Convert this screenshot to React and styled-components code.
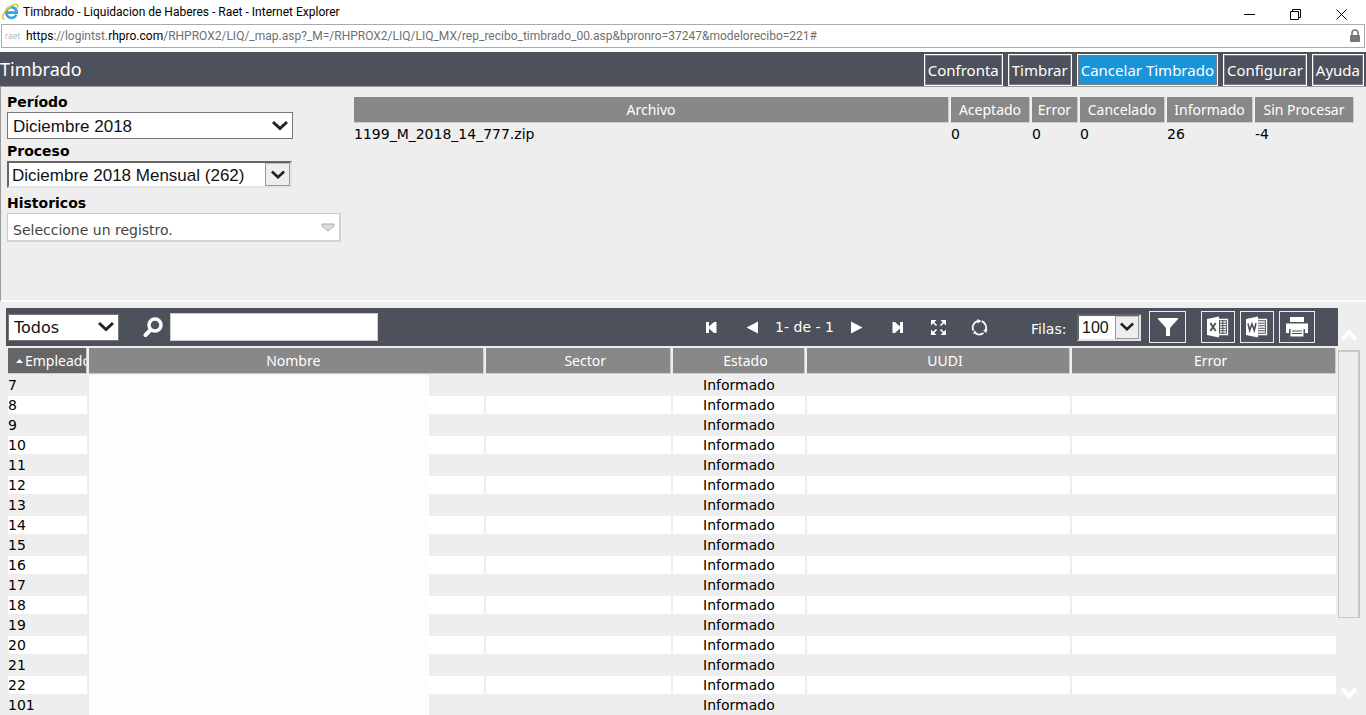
import React from "react";
import styled, { createGlobalStyle, css } from "styled-components";

const segoe = '"Noto Sans", "Open Sans", sans-serif';
const chrome = 'Roboto, "Open Sans", sans-serif';
const verdana = '"DejaVu Sans", sans-serif';
const arial = '"Liberation Sans", Arial, sans-serif';

const Global = createGlobalStyle`
  *, *::before, *::after { box-sizing: border-box; }
  body { margin: 0; background: #eee; font-family: ${verdana}; color: #000; overflow: hidden; }
  button { cursor: pointer; }
`;

const Page = styled.div`
  display: flex;
  flex-direction: column;
  min-height: 100vh;
`;

const TitleBar = styled.header`
  display: flex;
  align-items: center;
  height: 24px;
  padding: 0 2px;
  gap: 4px;
  background: #fff;
  font: 12px/16px ${chrome};
`;

const WindowControls = styled.div`
  display: flex;
  margin-left: auto;
`;

const WindowButton = styled.button`
  display: grid;
  place-items: center;
  width: 46px;
  height: 24px;
  padding: 4px 0 0;
  border: 0;
  background: none;
`;

const AddressArea = styled.div`
  padding: 0 1px 4px;
  background: #fff;
`;

const AddressBar = styled.div`
  display: flex;
  align-items: center;
  height: 24px;
  padding: 0 3px;
  border: 1px solid #aaa;
`;

const SiteMark = styled.span`
  width: 21px;
  color: #d9a3b5;
  font: 8px/12px ${segoe};
  i { font-style: normal; color: #9cc5b5; }
`;

const Url = styled.span`
  flex: 1;
  color: #707070;
  font: 12px/16px ${chrome};
  white-space: nowrap;
  b { font-weight: 400; color: #000; }
`;

const AppHeader = styled.div`
  display: flex;
  align-items: flex-end;
  justify-content: space-between;
  height: 35px;
  padding-right: 2px;
  background: #4d515b;
  border-bottom: 1px solid #999;
`;

const Title = styled.h1`
  margin: 0;
  color: #fff;
  font: 400 18px/34px ${segoe};
`;

const Actions = styled.nav`
  display: flex;
  gap: 5px;
`;

const ActionButton = styled.button`
  height: 32px;
  padding: 0 3px;
  border: 1px solid #fff;
  outline: 1px solid #777b83;
  outline-offset: -2px;
  background: ${(p) => (p.$active ? "#1a94d8" : "#4d515b")};
  color: #fff;
  font: 15px/28px ${segoe};
`;

const TopPanel = styled.section`
  display: flex;
  gap: 11px;
  height: 215px;
  padding: 7px 10px 0 6px;
  border-left: 1px solid #999;
  border-bottom: 2px solid #fafafa;
  background: #eee;
`;

const Filters = styled.div`
  display: flex;
  flex-direction: column;
  width: 334px;
`;

const Label = styled.label`
  height: 18px;
  font: 700 14px/16px ${verdana};
`;

const SelectBox = styled.div`
  display: grid;
  align-items: center;
  width: ${(p) => p.$w}px;
  height: ${(p) => p.$h || 27}px;
  margin-bottom: ${(p) => p.$mb || 0}px;
  background: #fff;
  border: 1px solid #777;
  > * { grid-area: 1 / 1; }
  > svg { justify-self: end; margin-right: 4px; pointer-events: none; }
  ${(p) => p.$inset && css`
    border: 2px solid;
    border-color: #666 #e3e3e3 #e3e3e3 #666;
  `}
  ${(p) => p.$soft && css`
    border: 2px solid;
    border-color: #ccc #d3d3d3 #d3d3d3 #ccc;
    border-top-width: 1px;
    border-left-width: 1px;
  `}
`;

const Select = styled.select`
  appearance: none;
  width: 100%;
  height: 100%;
  padding: ${(p) => p.$top || 0}px 0 0 ${(p) => p.$pad}px;
  border: 0;
  background: transparent;
  color: ${(p) => p.$color || "#111"};
  font: ${(p) => p.$font || `17px/20px ${arial}`};
`;

const ArrowCell = styled.span`
  justify-self: end;
  display: grid;
  place-items: center;
  width: ${(p) => p.$w}px;
  height: 100%;
  border: 1px solid #999;
  border-top-color: #bbb;
  background: #eee;
  pointer-events: none;
`;

const FilesArea = styled.div`
  flex: 1;
  padding-top: 1px;
`;

const Table = styled.table`
  width: 100%;
  table-layout: fixed;
  border-collapse: separate;
  border-spacing: 2px;
  background: #eee;
`;

const Col = styled.col`
  width: ${(p) => p.$w};
`;

const Th = styled.th`
  height: 26px;
  padding: 0 0 0 ${(p) => (p.$sortable ? 14 : 0)}px;
  border-right: 1px solid #ccc;
  border-bottom: 1px solid #ccc;
  background: ${(p) => (p.$sorted ? "#666" : "#888")};
  color: #fff;
  font: 400 14px/24px ${segoe};
  white-space: nowrap;
  overflow: hidden;
`;

const SortHead = styled.span`
  display: flex;
  align-items: center;
  gap: 2px;
  padding-left: 8px;
  svg { flex: none; }
`;

const Td = styled.td`
  height: 18px;
  padding: 0;
  font: 14px/18px ${verdana};
  text-align: ${(p) => p.$align || "left"};
  white-space: nowrap;
`;

const Row = styled.tr`
  &:nth-child(even) td { background: #fff; }
`;

const NameBlank = styled.div`
  width: 86%;
  height: 20px;
  margin: -1px 0;
  background: #fdfdfd;
`;

const Lower = styled.section`
  display: flex;
  flex: 1;
  padding: 6px 6px 0;
`;

const Listing = styled.div`
  flex: 1;
  min-width: 0;
`;

const Toolbar = styled.div`
  display: flex;
  align-items: center;
  height: 38px;
  padding: 0 23px 0 2px;
  background: #4d515b;
  color: #fff;
`;

const SearchButton = styled.button`
  display: grid;
  place-items: center;
  width: 20px;
  height: 24px;
  margin: 0 7px 0 24px;
  padding: 0;
  border: 0;
  background: none;
`;

const SearchInput = styled.input`
  width: 208px;
  height: 28px;
  padding: 0 4px;
  border: 1px solid #ccc;
  background: #fff;
  font: 14px/20px ${verdana};
`;

const Pager = styled.div`
  display: flex;
  align-items: center;
  margin: 0 31px 0 auto;
`;

const PagerButton = styled.button`
  display: grid;
  place-items: center;
  width: 41px;
  height: 28px;
  padding: 0;
  border: 0;
  background: none;
`;

const PageText = styled.span`
  width: 63px;
  font: 14px/18px ${verdana};
  text-align: center;
  white-space: nowrap;
`;

const RowsLabel = styled.label`
  width: 46px;
  padding-top: 4px;
  font: 14px/18px ${verdana};
`;

const ToolGroup = styled.div`
  display: flex;
  gap: 5px;
  margin-left: ${(p) => p.$gap}px;
`;

const ToolButton = styled.button`
  display: grid;
  place-items: center;
  width: ${(p) => p.$w || 34}px;
  height: 32px;
  padding: 0;
  border: 1px solid #eee;
  background: none;
`;

const ScrollTrack = styled.div`
  display: flex;
  flex-direction: column;
  align-items: center;
  width: 22px;
  padding: 21px 0 17px;
`;

const ScrollThumb = styled.div`
  width: 22px;
  height: 268px;
  margin: 9px 0 auto;
  border: 1px solid #c8c8c8;
  border-right-width: 2px;
  border-top-width: 2px;
  background: #eee;
`;

const Chevron = ({ w = 16, color = "#222" }) => (
  <svg width={w} height="12" viewBox="0 0 16 12" aria-hidden="true">
    <path d="M1 2 L8 8.500 L15 2" fill="none" stroke={color} strokeWidth="3" />
  </svg>
);

const ScrollArrow = ({ up }) => (
  <svg width="16" height="12" viewBox="0 0 16 12" aria-hidden="true">
    <path d={up ? "M1 10.5 L8 3 L15 10.5" : "M1 1.5 L8 9 L15 1.5"} fill="none" stroke="#fff" strokeWidth="4" />
  </svg>
);

const BrowserLogo = () => (
  <svg width="17" height="18" viewBox="0 0 17 18" aria-hidden="true">
    <path d="M14.3 11.8A5.3 5.3 0 1 1 14.2 7.2 M4 9.6H14.7C14.8 6 12.3 4 9.2 4" fill="none" stroke="#32a5dc" strokeWidth="2.6" />
    <path d="M2.8 16.2C-1 16 .8 10.5 5 6.2 9.5 1.7 15 0 15.7 2.2c.3 1-.1 2.1-.7 3.1" fill="none" stroke="#f2bd2b" strokeWidth="1.6" />
  </svg>
);

const LockIcon = () => (
  <svg width="12" height="14" viewBox="0 0 12 14" aria-hidden="true">
    <path d="M3 6V4a3 3 0 0 1 6 0v2" fill="none" stroke="#777" strokeWidth="1.6" />
    <rect x="1" y="6" width="10" height="7" rx="1" fill="#777" />
  </svg>
);

const pagerIcons = {
  first: <path d="M3 3h3v4.500L11 3h2.500v11H11L6 9.500V14H3z" />,
  prev: <path d="M14 2.5v12L2.5 8.5z" />,
  next: <path d="M3 2.5v12l11.5-6z" />,
  last: <path d="M14 3h-3v4.500L6 3H3.500v11H6l5-4.500V14h3z" />,
  expand: (
    <g>
      <path d="M1 1h5.500L1 6.500zM16 1v5.500L10.500 1zM1 16v-5.500L6.500 16zM16 16h-5.500l5.500-5.500z" />
      <path d="M2 2l4.500 4.500M15 2l-4.500 4.500M2 15l4.500-4.500M15 15l-4.500-4.500" stroke="#fff" strokeWidth="1.6" />
    </g>
  ),
  refresh: (
    <g>
      <path d="M2.300 11.500A7 7 0 0 1 7 1.800M10.800 2.100A7 7 0 0 1 14.300 11.800M12.500 14A7 7 0 0 1 4 13.800" fill="none" stroke="#fff" strokeWidth="1.7" />
      <path d="M6.500 0l4 2-4 2.500zM16.500 9.800l-1.300 4.400-3-3zM2.200 14.700l1.300-3.500 2.800 3.200z" />
    </g>
  ),
};

const PagerIcon = ({ name, label }) => (
  <PagerButton type="button" aria-label={label}>
    <svg width="17" height="17" viewBox="0 0 17 17" fill="#fff" aria-hidden="true">{pagerIcons[name]}</svg>
  </PagerButton>
);

const FilterIcon = () => (
  <svg width="20" height="20" viewBox="0 0 20 20" fill="#fff" aria-hidden="true">
    <path d="M0 1h20v1l-8 9v8H8v-8L0 2z" />
  </svg>
);

const OfficeIcon = ({ kind }) => (
  <svg width="22" height="22" viewBox="0 0 22 22" aria-hidden="true">
    <path d="M0 3l12-2.500v21L0 19z" fill="#fff" />
    <path d="M12 3.500h8.500v15H12" fill="none" stroke="#fff" strokeWidth="1.3" />
    <path
      d={kind === "excel" ? "M13 6h6M13 8.500h6M13 11h6M13 13.500h6M13 16h6" : "M12 6h7M12 8.500h7M12 11h7M12 13.500h7M12 16h7"}
      stroke="#fff"
      strokeWidth="1.4"
    />
    {kind === "excel" ? (
      <g>
        <path d="M15.800 4v14" stroke="#4d515b" />
        <path d="M3.300 7l5.400 8M8.700 7l-5.400 8" stroke="#4d515b" strokeWidth="1.9" />
      </g>
    ) : (
      <path d="M2 7.500l1.700 7L6 8l2.300 6.500L10 7" fill="none" stroke="#4d515b" strokeWidth="1.6" />
    )}
  </svg>
);

const PrintIcon = () => (
  <svg width="22" height="20" viewBox="0 0 22 20" aria-hidden="true">
    <path d="M4 0h14v5H4zM0 6.500h22V16h-3v-4H3v4H0z" fill="#fff" />
    <path d="M4.500 12h13v7.500h-13z" fill="#fff" />
    <path d="M6 14h10M6 16.500h10" stroke="#4d515b" />
  </svg>
);

const actions = ["Confronta", "Timbrar", "Cancelar Timbrado", "Configurar", "Ayuda"];

const fileColumns = [
  ["Archivo", "auto", "1199_M_2018_14_777.zip"],
  ["Aceptado", "79px", "0"],
  ["Error", "46px", "0"],
  ["Cancelado", "85px", "0"],
  ["Informado", "86px", "26"],
  ["Sin Procesar", "99px", "-4"],
];

const columns = [
  ["Empleado", "6%"],
  ["Nombre", "30%"],
  ["Sector", "14%"],
  ["Estado", "10%"],
  ["UUDI", "20%"],
  ["Error", "20%"],
];

const employees = [7, 8, 9, 10, 11, 12, 13, 14, 15, 16, 17, 18, 19, 20, 21, 22, 101];

export default function App() {
  return (
    <Page>
      <Global />
      <TitleBar>
        <BrowserLogo />
        <span>Timbrado - Liquidacion de Haberes - Raet - Internet Explorer</span>
        <WindowControls>
          <WindowButton type="button" aria-label="Minimizar">
            <svg width="11" height="11"><path d="M0 5.500h11" stroke="#000" /></svg>
          </WindowButton>
          <WindowButton type="button" aria-label="Restaurar">
            <svg width="11" height="11" fill="none" stroke="#000"><path d="M.5 2.500h8v8h-8zM2.500 2.500v-2h8v8h-2" /></svg>
          </WindowButton>
          <WindowButton type="button" aria-label="Cerrar">
            <svg width="11" height="11" stroke="#000"><path d="M.5.5l10 10M10.500.5l-10 10" /></svg>
          </WindowButton>
        </WindowControls>
      </TitleBar>
      <AddressArea>
        <AddressBar>
          <SiteMark>ra<i>et</i></SiteMark>
          <Url>
            <b>https</b>://logintst.<b>rhpro.com</b>/RHPROX2/LIQ/_map.asp?_M=/RHPROX2/LIQ/LIQ_MX/rep_recibo_timbrado_00.asp&amp;bpronro=37247&amp;modelorecibo=221#
          </Url>
          <LockIcon />
        </AddressBar>
      </AddressArea>

      <AppHeader>
        <Title>Timbrado</Title>
        <Actions>
          {actions.map((a) => (
            <ActionButton key={a} type="button" $active={a === "Cancelar Timbrado"}>{a}</ActionButton>
          ))}
        </Actions>
      </AppHeader>

      <TopPanel>
        <Filters>
          <Label htmlFor="periodo">Período</Label>
          <SelectBox $w={286} $mb={4}>
            <Select id="periodo" $pad={5} $top={2}><option>Diciembre 2018</option></Select>
            <Chevron />
          </SelectBox>
          <Label htmlFor="proceso">Proceso</Label>
          <SelectBox $w={285} $mb={7} $inset>
            <Select id="proceso" $pad={3} $top={2}><option>Diciembre 2018 Mensual (262)</option></Select>
            <ArrowCell $w={25}><Chevron w={14} /></ArrowCell>
          </SelectBox>
          <Label htmlFor="historicos">Historicos</Label>
          <SelectBox $w={334} $h={29} $soft>
            <Select id="historicos" $pad={5} $top={6} $color="#444" $font={`14px/20px ${verdana}`}>
              <option>Seleccione un registro.</option>
            </Select>
            <svg width="14" height="9" viewBox="0 0 14 9" aria-hidden="true">
              <path d="M1 1h12v2L7 8 1 3z" fill="#ddd" stroke="#aaa" />
            </svg>
          </SelectBox>
        </Filters>
        <FilesArea>
          <Table>
            <colgroup>{fileColumns.map(([n, w]) => <Col key={n} $w={w} />)}</colgroup>
            <thead><tr>{fileColumns.map(([n]) => <Th key={n}>{n}</Th>)}</tr></thead>
            <tbody><tr>{fileColumns.map(([n, , v]) => <Td key={n}>{v}</Td>)}</tr></tbody>
          </Table>
        </FilesArea>
      </TopPanel>

      <Lower>
        <Listing>
          <Toolbar>
            <SelectBox $w={111}>
              <Select aria-label="Filtro" $pad={5} $top={2} $font={`16px/20px ${verdana}`}><option>Todos</option></Select>
              <Chevron />
            </SelectBox>
            <SearchButton type="button" aria-label="Buscar">
              <svg width="20" height="21" viewBox="0 0 20 21" fill="none" stroke="#fff" aria-hidden="true">
                <circle cx="12" cy="8" r="6" strokeWidth="3.5" />
                <path d="M7.500 13L2.500 18" strokeWidth="4" strokeLinecap="round" />
              </svg>
            </SearchButton>
            <SearchInput type="text" aria-label="Texto a buscar" />
            <Pager>
              <PagerIcon name="first" label="Primera" />
              <PagerIcon name="prev" label="Anterior" />
              <PageText>1- de - 1</PageText>
              <PagerIcon name="next" label="Siguiente" />
              <PagerIcon name="last" label="Última" />
              <PagerIcon name="expand" label="Expandir" />
              <PagerIcon name="refresh" label="Actualizar" />
            </Pager>
            <RowsLabel htmlFor="filas">Filas:</RowsLabel>
            <SelectBox $w={64} $inset>
              <Select id="filas" $pad={3} $top={2} $font={`16px/20px ${arial}`}><option>100</option></Select>
              <ArrowCell $w={24}><Chevron w={14} /></ArrowCell>
            </SelectBox>
            <ToolGroup $gap={8}>
              <ToolButton type="button" aria-label="Filtrar" $w={37}><FilterIcon /></ToolButton>
            </ToolGroup>
            <ToolGroup $gap={15}>
              <ToolButton type="button" aria-label="Exportar a Excel"><OfficeIcon kind="excel" /></ToolButton>
              <ToolButton type="button" aria-label="Exportar a Word"><OfficeIcon kind="word" /></ToolButton>
              <ToolButton type="button" aria-label="Imprimir" $w={36}><PrintIcon /></ToolButton>
            </ToolGroup>
          </Toolbar>
          <Table>
            <colgroup>{columns.map(([n, w]) => <Col key={n} $w={w} />)}</colgroup>
            <thead>
              <tr>
                {columns.map(([n], i) => (
                  <Th key={n} $sorted={i === 0} $sortable={i > 0}>
                    {i === 0 ? (
                      <SortHead>
                        <svg width="7" height="4" aria-hidden="true"><path d="M0 4l3.500-4L7 4z" fill="#fff" /></svg>
                        {n}
                      </SortHead>
                    ) : n}
                  </Th>
                ))}
              </tr>
            </thead>
            <tbody>
              {employees.map((id) => (
                <Row key={id}>
                  <Td>{id}</Td>
                  <Td><NameBlank /></Td>
                  <Td />
                  <Td $align="center">Informado</Td>
                  <Td />
                  <Td />
                </Row>
              ))}
            </tbody>
          </Table>
        </Listing>
        <ScrollTrack aria-hidden="true">
          <ScrollArrow up />
          <ScrollThumb />
          <ScrollArrow />
        </ScrollTrack>
      </Lower>
    </Page>
  );
}
